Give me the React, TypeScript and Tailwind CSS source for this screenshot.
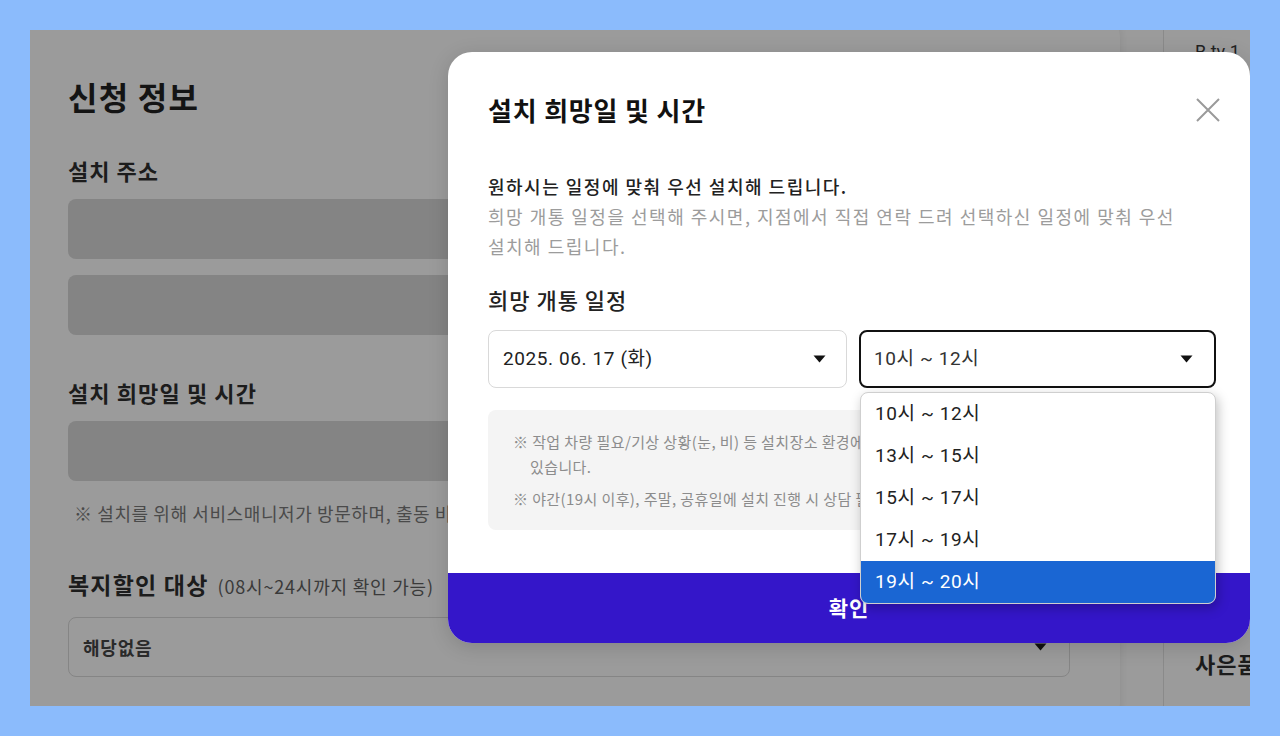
import React from 'react'

const kr = { fontFamily: '"Noto Sans CJK KR", "Noto Sans", sans-serif' }
const num = { fontFamily: 'Roboto, "Noto Sans CJK KR", sans-serif' }

function Caret({ className = '' }: { className?: string }) {
    return (
        <svg width="13" height="8" viewBox="0 0 13 8" className={className}>
            <path d="M0.5 0.5 H12.5 L6.5 7.5 Z" fill="currentColor" />
        </svg>
    )
}

const times = ['10시 ~ 12시', '13시 ~ 15시', '15시 ~ 17시', '17시 ~ 19시', '19시 ~ 20시']

function ScheduleModal() {
    return (
        <div className="absolute left-[418px] top-[22px] w-[802px] h-[591px] bg-white rounded-[24px] overflow-hidden flex flex-col shadow-[0_4px_20px_rgba(0,0,0,0.15)]">
            {/* Header */}
            <div className="flex items-center justify-between pl-[40px] pr-[30px] pt-[41px]">
                <h2 className="text-[26px] leading-[34px] tracking-[0.8px] font-bold text-[#111]">설치 희망일 및 시간</h2>
                <svg width="24" height="24" viewBox="0 0 24 24" className="text-[#9a9a9a]">
                    <path d="M1 1 L23 23 M23 1 L1 23" stroke="currentColor" strokeWidth="2" />
                </svg>
            </div>

            <div className="px-[40px]">
                <p className="mt-[44px] text-[18px] leading-[30px] tracking-[1.5px] whitespace-nowrap">
                    <span className="font-medium text-[#222]">원하시는 일정에 맞춰 우선 설치해 드립니다.</span>
                    <br />
                    <span className="text-[#9c9c9c]">
                        희망 개통 일정을 선택해 주시면, 지점에서 직접 연락 드려 선택하신 일정에 맞춰 우선
                        <br />
                        설치해 드립니다.
                    </span>
                </p>

                <h3 className="mt-[24px] text-[22px] leading-[28px] tracking-[1px] font-medium text-[#222]">희망 개통 일정</h3>

                {/* Date + time selects */}
                <div className="mt-[17px] flex gap-[12px] w-[728px]">
                    <div className="w-[359px] h-[58px] rounded-[8px] border border-[#d9d9d9] flex items-center justify-between pl-[14px] pr-[20px]">
                        <span style={num} className="text-[19px] tracking-[0.6px] text-[#222]">2025. 06. 17 (화)</span>
                        <Caret className="text-[#111]" />
                    </div>
                    <div className="w-[357px] h-[58px] rounded-[8px] border-2 border-[#111] flex items-center justify-between pl-[13px] pr-[21px]">
                        <span style={num} className="text-[19px] tracking-[0.6px] text-[#333]">10시 ~ 12시</span>
                        <Caret className="text-[#111]" />
                    </div>
                </div>

                {/* Notice box */}
                <div className="mt-[22px] h-[120px] rounded-[8px] bg-[#f4f4f4] overflow-hidden pl-[25px] pt-[19px] text-[15px] leading-[25px] tracking-[0.4px] text-[#8c8c8c] whitespace-nowrap">
                    <p>※ 작업 차량 필요/기상 상황(눈, 비) 등 설치장소 환경에 따라 변경될 수</p>
                    <p className="pl-[17px]">있습니다.</p>
                    <p className="mt-[7px]">※ 야간(19시 이후), 주말, 공휴일에 설치 진행 시 상담 필요</p>
                </div>
            </div>

            <button className="mt-auto h-[70px] w-full bg-[#3416c9] text-white text-[21px] tracking-[1px] font-bold">확인</button>

            {/* Open time dropdown */}
            <ul className="absolute left-[412px] top-[340px] w-[356px] bg-white rounded-[8px] border border-[#cfcfcf] overflow-hidden shadow-[2px_4px_12px_rgba(0,0,0,0.25)]">
                {times.map((t, i) => (
                    <li
                        key={t}
                        style={num}
                        className={`h-[42px] flex items-center pl-[14px] text-[19px] tracking-[0.6px] ${
                            i === times.length - 1 ? 'bg-[#1a66d3] text-white' : 'text-[#222]'
                        }`}
                    >
                        {t}
                    </li>
                ))}
            </ul>
        </div>
    )
}

export default function App() {
    return (
        <div style={kr} className="w-[1280px] h-[736px] bg-[#8bbbfc] p-[30px]">
            <div className="relative w-[1220px] h-[676px] bg-[#9b9b9b] overflow-hidden flex">
                {/* Dimmed page: left form card */}
                <div className="w-[1090px] h-[720px] -mt-[20px] shrink-0 rounded-r-[28px] shadow-[2px_0_6px_rgba(0,0,0,0.06)] pl-[38px] pt-[66px] whitespace-nowrap">
                    <h1 className="text-[32px] leading-[40px] tracking-[1.2px] font-bold text-[#141414]">신청 정보</h1>

                    <h2 className="mt-[40px] text-[22px] leading-[28px] tracking-[1px] font-semibold text-[#1c1c1c]">설치 주소</h2>
                    <div className="mt-[15px] w-[1002px] h-[60px] rounded-[8px] bg-[#848484]" />
                    <div className="mt-[16px] w-[1002px] h-[60px] rounded-[8px] bg-[#848484]" />

                    <h2 className="mt-[43px] text-[22px] leading-[28px] tracking-[1.1px] font-semibold text-[#1c1c1c]">설치 희망일 및 시간</h2>
                    <div className="mt-[15px] w-[1002px] h-[60px] rounded-[8px] bg-[#848484]" />
                    <p className="mt-[20px] pl-[6px] text-[18px] leading-[24px] tracking-[0.6px] text-[#4a4a4a]">
                        ※ 설치를 위해 서비스매니저가 방문하며, 출동 비용이 발생할 수 있습니다.
                    </p>

                    <h2 className="mt-[45px] text-[23px] leading-[28px] tracking-[1.2px] font-bold text-[#1c1c1c]">
                        복지할인 대상
                        <span className="ml-[9px] text-[18px] tracking-[0.8px] font-normal text-[#3a3a3a]">(08시~24시까지 확인 가능)</span>
                    </h2>
                    <div className="mt-[17px] w-[1002px] h-[60px] rounded-[8px] border border-[#858585] flex items-center justify-between pl-[14px] pr-[22px]">
                        <span className="text-[18px] tracking-[0.8px] font-semibold text-[#2a2a2a]">해당없음</span>
                        <Caret className="text-[#111]" />
                    </div>
                </div>

                {/* Dimmed page: right summary column */}
                <div className="ml-[43px] w-px h-full bg-[#8a8a8a] shrink-0" />
                <div className="pl-[31px] flex flex-col justify-between pt-[8px] pb-[26px] whitespace-nowrap">
                    <span style={num} className="text-[18px] text-[#222]">B tv 1</span>
                    <span className="text-[22px] tracking-[1px] font-semibold text-[#1c1c1c]">사은품</span>
                </div>

                <ScheduleModal />
            </div>
        </div>
    )
}
